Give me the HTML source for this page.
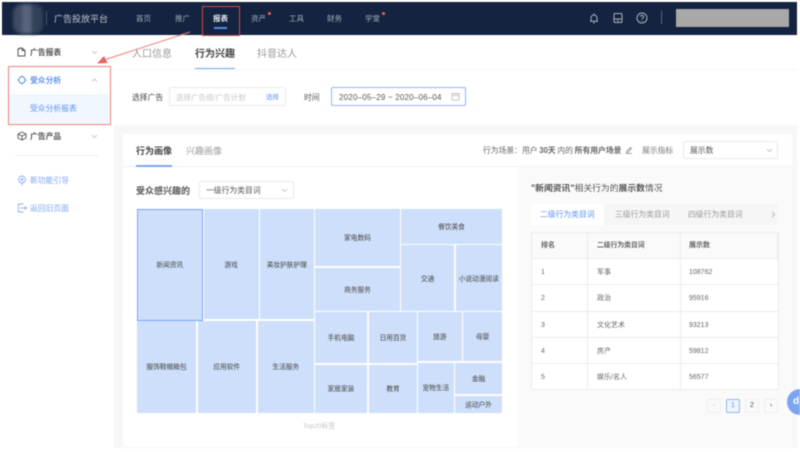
<!DOCTYPE html>
<html lang="zh">
<head>
<meta charset="utf-8">
<style>
html,body{margin:0;padding:0;background:#fff}
#p{position:relative;width:800px;height:452px;overflow:hidden;background:#fff;font-family:"Liberation Sans","Noto Sans CJK SC",sans-serif;color:#555;font-size:8px;filter:blur(.42px)}
#p div,#p span.a{position:absolute;box-sizing:border-box}
.t{position:absolute;white-space:nowrap;line-height:12px;height:12px;transform:translateY(-5px)}
.n{font-size:7.5px;color:#a3adbf}
.b{font-weight:700}
.box{background:#cddffa;display:flex;align-items:center;justify-content:center;font-size:6.7px;color:#444;white-space:nowrap;padding-bottom:1px}
.sel{background:#fff;border:1px solid #ebebeb;border-radius:2px}
.row{left:531px;width:247px;border-bottom:1px solid #ececec;background:#fff}
.pg{top:399px;width:14px;height:14px;border:1px solid #eee;border-radius:2px;background:#fafafa;text-align:center;line-height:12px;font-size:7px;color:#555}
svg{position:absolute;overflow:visible}
</style>
</head>
<body>
<div id="p">
<!-- background -->
<div style="left:2px;top:36px;width:795px;height:412px;background:#f6f7f9"></div>
<div style="left:2px;top:36px;width:112px;height:412px;background:#fff"></div>
<div style="left:114px;top:36px;width:683px;height:33px;background:#fff"></div>
<div style="left:114px;top:70px;width:683px;height:55px;background:#fff"></div>

<!-- top bar -->
<div style="left:2px;top:2px;width:795px;height:33px;background:#14233f"></div>
<div style="left:13px;top:4px;width:30px;height:30px;border-radius:9px;filter:blur(1.5px);background:linear-gradient(90deg,#3f4c64 0,#3f4c64 30%,#58647a 30%,#58647a 62%,#33415a 62%,#33415a 100%)"></div>
<div style="left:46px;top:11px;width:1px;height:14px;background:#46536b"></div>
<span class="t" style="left:54px;top:18px;font-size:9px;color:#c0c6d1">广告投放平台</span>
<span class="t n" style="left:136px;top:18px">首页</span>
<span class="t n" style="left:175px;top:18px">推广</span>
<span class="t n" style="left:213px;top:18px;color:#e3e7ee;font-weight:700">报表</span>
<span class="t n" style="left:251px;top:18px">资产</span>
<span class="t n" style="left:289px;top:18px">工具</span>
<span class="t n" style="left:327px;top:18px">财务</span>
<span class="t n" style="left:365px;top:18px">学堂</span>
<div style="left:268px;top:12px;width:3px;height:3px;border-radius:50%;background:#e8605a"></div>
<div style="left:382px;top:12px;width:3px;height:3px;border-radius:50%;background:#e8605a"></div>
<div style="left:214px;top:27px;width:13px;height:2px;background:#4f8df0"></div>
<div style="left:202px;top:6px;width:38px;height:30px;border:1.2px solid #c9504a"></div>

<!-- right top icons -->
<svg style="left:588px;top:12px" width="12" height="12" viewBox="0 0 12 12" fill="none" stroke="#a9b1bf" stroke-width="1"><path d="M2 9.2h8M3 9.2V6a3 3 0 0 1 6 0v3.2M5 10.8h2M6 2.500V1.500"/></svg>
<svg style="left:612px;top:12px" width="12" height="12" viewBox="0 0 12 12" fill="none" stroke="#a9b1bf" stroke-width="1"><rect x="2" y="1.500" width="8" height="9" rx="1"/><path d="M2 7h8M5 8.800h2"/></svg>
<svg style="left:636px;top:12px" width="12" height="12" viewBox="0 0 12 12" fill="none" stroke="#a9b1bf" stroke-width="1"><circle cx="6" cy="6" r="5"/><path d="M4.500 4.800a1.500 1.500 0 1 1 2.200 1.300C6.200 6.400 6 6.700 6 7.300M6 8.500v.8"/></svg>
<div style="left:661px;top:11px;width:1px;height:13px;background:#5a667c"></div>
<div style="left:676px;top:9px;width:113px;height:18px;background:#a8a8a8"></div>

<!-- sidebar -->
<svg style="left:17px;top:47px" width="9" height="10" viewBox="0 0 9 10" fill="none" stroke="#555" stroke-width="1"><path d="M1 2h1.500V1H5l3 2.500V9H1zM5 1v2.500h3"/></svg>
<span class="t b" style="left:30px;top:52px;font-size:7.800px;color:#555">广告报表</span>
<svg style="left:91px;top:50px" width="7" height="5" viewBox="0 0 7 5" fill="none" stroke="#bbb" stroke-width=".8"><path d="M1 1l2.500 2.500L6 1"/></svg>

<div style="left:9px;top:94px;width:100px;height:29px;background:#f1f7fe"></div>
<div style="left:8px;top:66px;width:103px;height:59px;border:1.500px solid #ea8179"></div>
<svg style="left:17px;top:75px" width="10" height="10" viewBox="0 0 10 10" fill="none" stroke="#5b93ef" stroke-width="1"><circle cx="5" cy="5" r="3.200"/><path d="M5 .5v1.500M5 8v1.500M.5 5H2M8 5h1.500"/></svg>
<span class="t b" style="left:30px;top:80px;font-size:7.800px;color:#5b93ef">受众分析</span>
<svg style="left:91px;top:78px" width="7" height="5" viewBox="0 0 7 5" fill="none" stroke="#9dbcf0" stroke-width=".8"><path d="M1 3.500L3.500 1 6 3.500"/></svg>
<span class="t" style="left:30px;top:108px;font-size:7.800px;color:#5b93ef">受众分析报表</span>

<svg style="left:17px;top:131px" width="10" height="10" viewBox="0 0 10 10" fill="none" stroke="#555" stroke-width=".9"><path d="M5 1l4 2v4L5 9 1 7V3zM1 3l4 2 4-2M5 5v4"/></svg>
<span class="t b" style="left:30px;top:136px;font-size:7.800px;color:#555">广告产品</span>
<svg style="left:91px;top:134px" width="7" height="5" viewBox="0 0 7 5" fill="none" stroke="#bbb" stroke-width=".8"><path d="M1 1l2.500 2.500L6 1"/></svg>
<div style="left:15px;top:155px;width:83px;height:1px;background:#ececec"></div>

<svg style="left:17px;top:175px" width="10" height="11" viewBox="0 0 10 11" fill="none" stroke="#86aef2" stroke-width=".9"><circle cx="5" cy="4.500" r="3.500"/><circle cx="5" cy="4.500" r="1"/><path d="M5 8v2.500"/></svg>
<span class="t" style="left:30px;top:180px;font-size:7.800px;color:#7ba6f0">新功能引导</span>
<svg style="left:17px;top:203px" width="10" height="10" viewBox="0 0 10 10" fill="none" stroke="#86aef2" stroke-width=".9"><path d="M6 1.500V1H1.500v8H6v-.5M3.500 5H9.500M8 3.500L9.500 5 8 6.500"/></svg>
<span class="t" style="left:30px;top:208px;font-size:7.800px;color:#7ba6f0">返回旧页面</span>

<!-- arrow -->
<svg style="left:0;top:0" width="800" height="452" fill="none"><path d="M190 32L104 60" stroke="#ea8179" stroke-width="1"/><path d="M97 63.500L104 56l3.500 7z" fill="#e8645c"/></svg>

<!-- tabs -->
<span class="t" style="left:132px;top:53.500px;font-size:10px;color:#999">人口信息</span>
<span class="t" style="left:195px;top:53.500px;font-size:10px;color:#444;font-weight:700">行为兴趣</span>
<span class="t" style="left:257px;top:53.500px;font-size:10px;color:#999">抖音达人</span>
<div style="left:195px;top:68px;width:40px;height:1px;background:#6ea2ef"></div>

<!-- filter -->
<span class="t" style="left:132px;top:97px;font-size:7.800px;color:#444">选择广告</span>
<div class="sel" style="left:169px;top:87px;width:117px;height:19px"></div>
<span class="t" style="left:176px;top:97px;font-size:7.500px;color:#c4c4c4">选择广告组/广告计划</span>
<span class="t" style="left:266px;top:97px;font-size:6.500px;color:#5b93ef">选择</span>
<span class="t" style="left:304px;top:97px;font-size:7.800px;color:#555">时间</span>
<div style="left:331px;top:87px;width:135px;height:19px;background:#fff;border:1px solid #8fb5f5;border-radius:2px"></div>
<span class="t" style="left:339px;top:97px;font-size:8px;letter-spacing:.2px;color:#555">2020–05–29 ~ 2020–06–04</span>
<svg style="left:451px;top:92px" width="9" height="9" viewBox="0 0 9 9" fill="none" stroke="#bbb" stroke-width=".8"><rect x="1" y="1.500" width="7" height="6.500"/><path d="M1 3.500h7M3 1v1.500M6 1v1.500"/></svg>

<!-- card -->
<div style="left:123px;top:134px;width:669px;height:313px;background:#fff"></div>
<div style="left:518px;top:167px;width:274px;height:280px;background:#fafafa"></div>
<div style="left:123px;top:166px;width:669px;height:1px;background:#f0f0f0"></div>
<span class="t b" style="left:136px;top:150px;font-size:9px;color:#444">行为画像</span>
<span class="t" style="left:186px;top:150px;font-size:9px;color:#999">兴趣画像</span>
<div style="left:136px;top:165px;width:36px;height:1.500px;background:#7aa9f0"></div>

<span class="t" style="left:483px;top:150px;font-size:7.800px;color:#666;word-spacing:-.5px">行为场景：用户 <b>30天</b> 内的 <b>所有用户场景</b></span>
<svg style="left:625px;top:146px" width="8" height="8" viewBox="0 0 8 8" fill="none" stroke="#888" stroke-width=".8"><path d="M1.500 5.500L5.500 1.500l1 1-4 4H1.500zM1 7.500h6"/></svg>
<span class="t" style="left:642px;top:150px;font-size:7.800px;color:#777">展示指标</span>
<div class="sel" style="left:683px;top:141px;width:95px;height:18px"></div>
<span class="t" style="left:690px;top:150px;font-size:7.800px;color:#555">展示数</span>
<svg style="left:766px;top:148px" width="7" height="5" viewBox="0 0 7 5" fill="none" stroke="#bbb" stroke-width=".8"><path d="M1 1l2.500 2.500L6 1"/></svg>

<span class="t b" style="left:136px;top:190px;font-size:9px;color:#555">受众感兴趣的</span>
<div class="sel" style="left:199px;top:181px;width:95px;height:18px"></div>
<span class="t" style="left:206px;top:190px;font-size:7.800px;color:#555">一级行为类目词</span>
<svg style="left:281px;top:188px" width="7" height="5" viewBox="0 0 7 5" fill="none" stroke="#bbb" stroke-width=".8"><path d="M1 1l2.500 2.500L6 1"/></svg>

<!-- treemap -->
<div class="box" style="left:136.500px;top:208.500px;width:66.500px;height:112px;border:1px solid #7ba6f5">新闻资讯</div>
<div class="box" style="left:203.500px;top:209px;width:55px;height:110px">游戏</div>
<div class="box" style="left:259.500px;top:209px;width:54.500px;height:110px">美妆护肤护理</div>
<div class="box" style="left:137px;top:320.500px;width:59px;height:92.500px">服饰鞋帽箱包</div>
<div class="box" style="left:197.500px;top:320.500px;width:58.500px;height:92.500px">应用软件</div>
<div class="box" style="left:257.500px;top:320.500px;width:56.500px;height:92.500px">生活服务</div>
<div class="box" style="left:315px;top:209px;width:85px;height:57px">家电数码</div>
<div class="box" style="left:401px;top:209px;width:101px;height:35px">餐饮美食</div>
<div class="box" style="left:315px;top:267.500px;width:85px;height:43px">商务服务</div>
<div class="box" style="left:401px;top:245px;width:53px;height:66px">交通</div>
<div class="box" style="left:455.500px;top:245px;width:46.500px;height:66px">小说动漫阅读</div>
<div class="box" style="left:315px;top:312px;width:52px;height:51px">手机电脑</div>
<div class="box" style="left:369px;top:312px;width:48px;height:51px">日用百货</div>
<div class="box" style="left:418px;top:312px;width:43.500px;height:49px">旅游</div>
<div class="box" style="left:463px;top:312px;width:39px;height:49px">母婴</div>
<div class="box" style="left:315px;top:364.500px;width:52px;height:48.500px">家居家装</div>
<div class="box" style="left:369px;top:364.500px;width:48px;height:48.500px">教育</div>
<div class="box" style="left:418px;top:362.500px;width:35.500px;height:50.500px">宠物生活</div>
<div class="box" style="left:455px;top:362.500px;width:47px;height:31.500px">金融</div>
<div class="box" style="left:455px;top:395.500px;width:47px;height:17.500px;padding-bottom:0">运动户外</div>
<span class="t" style="left:303px;top:426px;font-size:6.800px;color:#c4c4c4">Top20标签</span>

<!-- right panel -->
<span class="t" style="left:531px;top:187px;font-size:8.800px;color:#555"><b>"新闻资讯"</b>相关行为的<b>展示数</b>情况</span>
<div style="left:531px;top:204px;width:247px;height:21px;background:#f6f6f6"></div>
<div style="left:531px;top:204px;width:73px;height:21px;background:#fff"></div>
<span class="t" style="left:540px;top:214px;font-size:7.800px;color:#5b93ef">二级行为类目词</span>
<span class="t" style="left:615px;top:214px;font-size:7.800px;color:#999">三级行为类目词</span>
<span class="t" style="left:688px;top:214px;font-size:7.800px;color:#999">四级行为类目词</span>
<svg style="left:771px;top:211px" width="5" height="7" viewBox="0 0 5 7" fill="none" stroke="#aaa" stroke-width=".8"><path d="M1 1l2.500 2.500L1 6"/></svg>

<div style="left:531px;top:232px;width:247px;height:27px;background:#fafafa;border:1px solid #ececec"></div>
<div class="row" style="top:259px;height:26px"></div>
<div class="row" style="top:285px;height:26.500px"></div>
<div class="row" style="top:311.500px;height:26.500px"></div>
<div class="row" style="top:338px;height:26px"></div>
<div class="row" style="top:364px;height:26px"></div>
<div style="left:531px;top:232px;width:1px;height:158px;background:#ececec"></div>
<div style="left:587px;top:232px;width:1px;height:158px;background:#ececec"></div>
<div style="left:680px;top:232px;width:1px;height:158px;background:#ececec"></div>
<div style="left:778px;top:232px;width:1px;height:158px;background:#ececec"></div>
<span class="t b" style="left:541px;top:245px;font-size:7px;color:#666">排名</span>
<span class="t b" style="left:597px;top:245px;font-size:6.800px;color:#666">二级行为类目词</span>
<span class="t b" style="left:689px;top:245px;font-size:7px;color:#666">展示数</span>
<span class="t" style="left:541px;top:272px;font-size:7px;color:#666">1</span>
<span class="t" style="left:597px;top:272px;font-size:7px;color:#666">军事</span>
<span class="t" style="left:689px;top:272px;font-size:7px;color:#666">108762</span>
<span class="t" style="left:541px;top:298px;font-size:7px;color:#666">2</span>
<span class="t" style="left:597px;top:298px;font-size:7px;color:#666">政治</span>
<span class="t" style="left:689px;top:298px;font-size:7px;color:#666">95916</span>
<span class="t" style="left:541px;top:325px;font-size:7px;color:#666">3</span>
<span class="t" style="left:597px;top:325px;font-size:7px;color:#666">文化艺术</span>
<span class="t" style="left:689px;top:325px;font-size:7px;color:#666">93213</span>
<span class="t" style="left:541px;top:351px;font-size:7px;color:#666">4</span>
<span class="t" style="left:597px;top:351px;font-size:7px;color:#666">房产</span>
<span class="t" style="left:689px;top:351px;font-size:7px;color:#666">59812</span>
<span class="t" style="left:541px;top:377px;font-size:7px;color:#666">5</span>
<span class="t" style="left:597px;top:377px;font-size:7px;color:#666">娱乐/名人</span>
<span class="t" style="left:689px;top:377px;font-size:7px;color:#666">56577</span>

<!-- pagination -->
<div class="pg" style="left:707px;color:#ccc">‹</div>
<div class="pg" style="left:726px;border-color:#8fb5f5;background:#eef4fe;color:#5b93ef">1</div>
<div class="pg" style="left:745px">2</div>
<div class="pg" style="left:764px">›</div>

<!-- floating button -->
<div style="left:787px;top:389px;width:26px;height:26px;border-radius:50%;background:#7ba6ee;color:#fff;font-size:10px;line-height:26px;padding-left:6px;font-weight:700">d</div>
</div>
</body>
</html>
